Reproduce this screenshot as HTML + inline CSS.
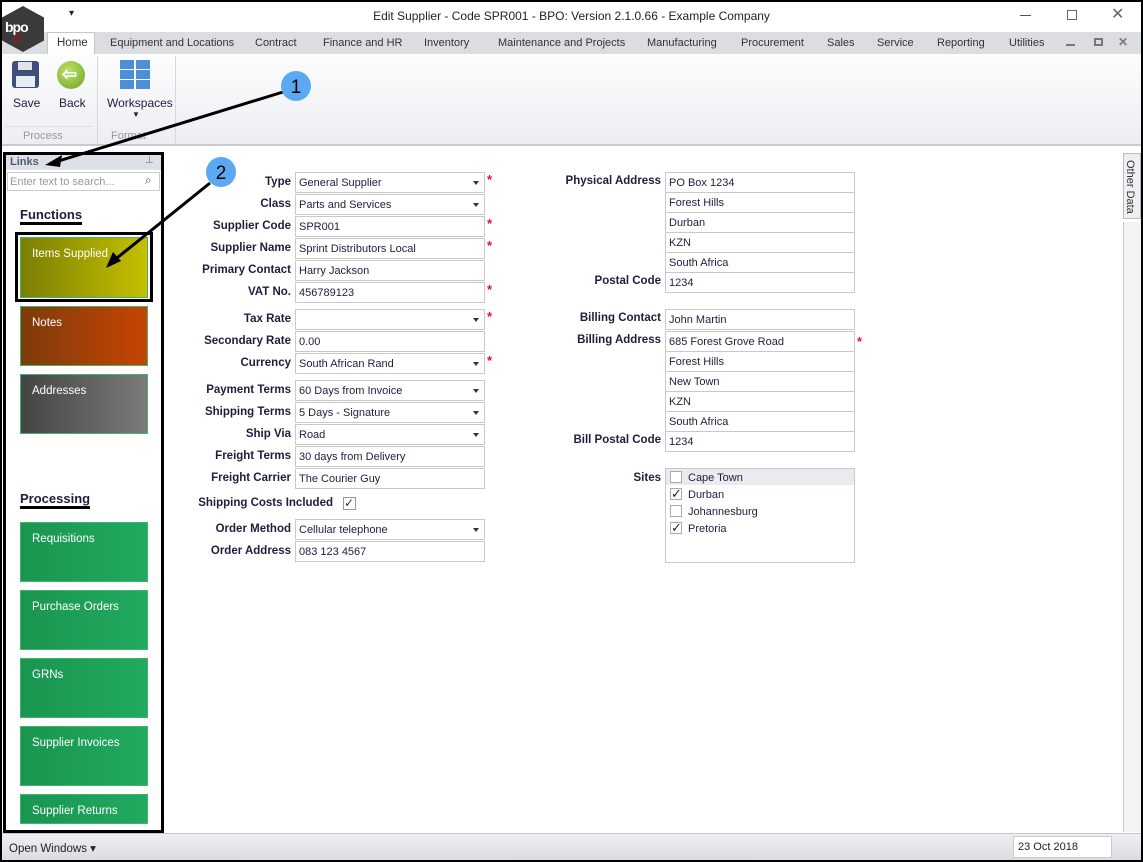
<!DOCTYPE html>
<html><head><meta charset="utf-8"><style>
*{box-sizing:border-box;margin:0;padding:0}
body{width:1143px;height:862px;position:relative;overflow:hidden;background:#fff;font-family:"Liberation Sans",Tahoma,sans-serif;font-size:11px;color:#1e1e3c}
.a{position:absolute}
.frame{left:0;top:0;width:1143px;height:862px;border:2px solid #000;pointer-events:none;z-index:50}
.tab{position:absolute;top:37px;font-size:11px;color:#333}
.lbl{position:absolute;font-weight:bold;font-size:11.5px;text-align:right;color:#1e1e3c}
.inp{position:absolute;height:21px;border:1px solid #c9c9c9;background:#fff;font-size:11px;padding:4px 0 0 3px;color:#1e1e3c}
.dd::after{content:"";position:absolute;right:5px;top:8px;border:3.5px solid transparent;border-top:4px solid #333}
.req{position:absolute;color:#e0103a;font-size:13px;font-weight:bold}
.tile{position:absolute;left:20px;width:128px;color:#fff;font-size:11.5px;padding:10px 0 0 11px;border:1px solid #3fb56a}
.head{position:absolute;left:20px;font-weight:bold;font-size:13px;color:#1e1e3c;border-bottom:3px solid #000;padding-bottom:0px}
</style></head><body>
<div class="a frame"></div>
<!-- title bar -->
<div class="a" style="left:0;top:0;width:1143px;height:32px;background:#fff"></div>
<div class="a" style="left:69px;top:8px;font-size:10px">▾</div>
<div class="a" style="left:0;top:9px;width:1143px;text-align:center;font-size:12px;color:#222">Edit Supplier - Code SPR001 - BPO: Version 2.1.0.66 - Example Company</div>
<div class="a" style="left:1020px;top:15px;width:11px;height:1px;background:#555"></div>
<div class="a" style="left:1067px;top:10px;width:10px;height:10px;border:1px solid #666"></div>
<div class="a" style="left:1111px;top:4px;font-size:16px;color:#666">✕</div>
<!-- tabs -->
<div class="a" style="left:2px;top:32px;width:1139px;height:22px;background:#dcdde1"></div>
<div class="a" style="left:47px;top:32px;width:48px;height:23px;background:#fff;border:1px solid #c6c6c6;border-bottom:none"></div>
<div class="tab" style="left:57px;font-size:11.5px">Home</div>
<div class="tab" style="left:110px">Equipment and Locations</div>
<div class="tab" style="left:255px">Contract</div>
<div class="tab" style="left:323px">Finance and HR</div>
<div class="tab" style="left:424px">Inventory</div>
<div class="tab" style="left:498px">Maintenance and Projects</div>
<div class="tab" style="left:647px">Manufacturing</div>
<div class="tab" style="left:741px">Procurement</div>
<div class="tab" style="left:827px">Sales</div>
<div class="tab" style="left:877px">Service</div>
<div class="tab" style="left:937px">Reporting</div>
<div class="tab" style="left:1009px">Utilities</div>
<div class="a" style="left:1066px;top:44px;width:9px;height:2px;background:#777"></div>
<div class="a" style="left:1094px;top:38px;width:9px;height:8px;border:2px solid #777"></div>
<div class="a" style="left:1118px;top:35px;font-size:12px;color:#777;font-weight:bold">✕</div>
<!-- logo -->
<div class="a" style="left:2px;top:6px;width:42px;height:46px;background:#3a3a3a;clip-path:polygon(50% 0,100% 25%,100% 75%,50% 100%,0 75%,0 25%);z-index:5"></div>
<div class="a" style="left:5px;top:19px;color:#fff;font-weight:bold;font-size:14px;letter-spacing:-1px;z-index:6">bpo</div>
<div class="a" style="left:14px;top:35px;width:7px;height:7px;border:1.5px solid #d00;border-radius:2px;z-index:6"></div>
<!-- ribbon -->
<div class="a" style="left:2px;top:54px;width:1139px;height:92px;background:linear-gradient(#fdfdfe,#eceef2);border-bottom:2px solid #c8cad0"></div>
<div class="a" style="left:97px;top:56px;width:1px;height:88px;background:#d8d8dc"></div>
<div class="a" style="left:175px;top:56px;width:1px;height:88px;background:#d8d8dc"></div>
<div class="a" style="left:12px;top:61px;width:27px;height:27px;background:#3d4f7a;border-radius:3px"></div>
<div class="a" style="left:18px;top:62px;width:14px;height:8px;background:#dfe3ea"></div>
<div class="a" style="left:16px;top:76px;width:19px;height:11px;background:#e8ecf3"></div>
<div class="a" style="left:13px;top:96px;font-size:12px">Save</div>
<div class="a" style="left:57px;top:61px;width:28px;height:28px;border-radius:50%;background:radial-gradient(circle at 40% 35%,#bfe26a,#6ca21f)"></div>
<div class="a" style="left:62px;top:64px;color:#fff;font-size:18px;font-weight:bold">⇦</div>
<div class="a" style="left:59px;top:96px;font-size:12px">Back</div>
<div class="a" style="left:120px;top:60px;width:30px;height:29px;background:repeating-linear-gradient(90deg,#4d8fd6 0 14px,transparent 14px 16px),#fff;-webkit-mask:repeating-linear-gradient(#000 0 9px,transparent 9px 10px)"></div>
<div class="a" style="left:107px;top:96px;font-size:12px">Workspaces</div>
<div class="a" style="left:132px;top:110px;font-size:8px">▼</div>
<div class="a" style="left:23px;top:130px;font-size:11px;color:#999">Process</div>
<div class="a" style="left:111px;top:130px;font-size:11px;color:#999">Format</div>
<div class="a" style="left:4px;top:126px;width:89px;height:1px;background:#e0e0e4"></div>
<!-- links panel -->
<div class="a" style="left:3px;top:152px;width:161px;height:681px;border:3px solid #000;background:#fff"></div>
<div class="a" style="left:6px;top:155px;width:155px;height:15px;background:#dde0e6"></div>
<div class="a" style="left:10px;top:156px;font-weight:bold;font-size:11px;color:#555a70">Links</div>
<div class="a" style="left:145px;top:155px;font-size:10px;color:#777">⊥</div>
<div class="a" style="left:7px;top:172px;width:153px;height:19px;border:1px solid #ccc;background:#fff;color:#999;font-size:11px;padding:3px 0 0 2px">Enter text to search...</div>
<div class="a" style="left:145px;top:173px;font-size:12px;color:#555">⌕</div>
<div class="head" style="top:207px">Functions</div>
<div class="a" style="left:15px;top:232px;width:138px;height:70px;border:3px solid #000"></div>
<div class="tile" style="top:237px;height:61px;background:linear-gradient(90deg,#7b7f04,#c5c000)">Items Supplied</div>
<div class="tile" style="top:306px;height:60px;background:linear-gradient(90deg,#7d3c0b,#c64404)">Notes</div>
<div class="tile" style="top:374px;height:60px;background:linear-gradient(90deg,#444,#7b7b7b)">Addresses</div>
<div class="head" style="top:491px">Processing</div>
<div class="tile" style="top:522px;height:60px;background:linear-gradient(90deg,#1a9550,#21aa60)">Requisitions</div>
<div class="tile" style="top:590px;height:60px;background:linear-gradient(90deg,#1a9550,#21aa60)">Purchase Orders</div>
<div class="tile" style="top:658px;height:60px;background:linear-gradient(90deg,#1a9550,#21aa60)">GRNs</div>
<div class="tile" style="top:726px;height:60px;background:linear-gradient(90deg,#1a9550,#21aa60)">Supplier Invoices</div>
<div class="tile" style="top:794px;height:30px;background:linear-gradient(90deg,#1a9550,#21aa60)">Supplier Returns</div>
<!-- other data -->
<div class="a" style="left:1123px;top:153px;width:18px;height:66px;background:#eeeff2;border:1px solid #bbb"></div>
<div class="a" style="left:1124px;top:160px;writing-mode:vertical-rl;font-size:11px;color:#333">Other Data</div>
<div class="a" style="left:1123px;top:222px;width:18px;height:610px;background:#f2f3f5;border-left:1px solid #ccc"></div>
<!-- forms -->
<div id="lf"></div>
<script>
var L=[["Type",182,"General Supplier",1,1],["Class",204,"Parts and Services",1,0],["Supplier Code",226,"SPR001",0,1],["Supplier Name",248,"Sprint Distributors Local",0,1],["Primary Contact",270,"Harry Jackson",0,0],["VAT No.",292,"456789123",0,1],["Tax Rate",319,"",1,1],["Secondary Rate",341,"0.00",0,0],["Currency",363,"South African Rand",1,1],["Payment Terms",390,"60 Days from Invoice",1,0],["Shipping Terms",412,"5 Days - Signature",1,0],["Ship Via",434,"Road",1,0],["Freight Terms",456,"30 days from Delivery",0,0],["Freight Carrier",478,"The Courier Guy",0,0],["Order Method",529,"Cellular telephone",1,0],["Order Address",551,"083 123 4567",0,0]];
var h="";
L.forEach(function(r){h+='<div class="lbl" style="left:150px;width:141px;top:'+(r[1]-6)+'px">'+r[0]+'</div><div class="inp'+(r[3]?' dd':'')+'" style="left:295px;width:190px;top:'+(r[1]-10)+'px">'+r[2]+'</div>'+(r[4]?'<div class="req" style="left:487px;top:'+(r[1]-10)+'px">*</div>':'');});
h+='<div class="lbl" style="left:150px;width:183px;top:497px">Shipping Costs Included</div><div class="a" style="left:343px;top:497px;width:13px;height:13px;border:1px solid #999;font-size:12px;line-height:11px;color:#333">✓</div>';
var R=[["Physical Address",182,"PO Box 1234"],["",202,"Forest Hills"],["",222,"Durban"],["",242,"KZN"],["",262,"South Africa"],["Postal Code",282,"1234"],["Billing Contact",319,"John Martin"],["Billing Address",341,"685 Forest Grove Road"],["",361,"Forest Hills"],["",381,"New Town"],["",401,"KZN"],["",421,"South Africa"],["Bill Postal Code",441,"1234"]];
R.forEach(function(r){h+=(r[0]?'<div class="lbl" style="left:500px;width:161px;top:'+(r[1]-7)+'px">'+r[0]+'</div>':'')+'<div class="inp" style="left:665px;width:190px;top:'+(r[1]-10)+'px">'+r[2]+'</div>';});
h+='<div class="req" style="left:857px;top:334px">*</div>';
document.getElementById("lf").innerHTML=h;
</script>
<div class="lbl" style="left:500px;width:161px;top:472px">Sites</div>
<div class="a" style="left:665px;top:468px;width:190px;height:95px;border:1px solid #c9c9c9;background:#fff"></div>
<div class="a" style="left:666px;top:469px;width:188px;height:16px;background:#eaebee"></div>
<div class="a" style="left:670px;top:471px;width:12px;height:12px;border:1px solid #aaa;background:#fff"></div>
<div class="a" style="left:688px;top:472px">Cape Town</div>
<div class="a" style="left:670px;top:488px;width:12px;height:12px;border:1px solid #aaa;font-size:13px;line-height:10px">✓</div>
<div class="a" style="left:688px;top:489px">Durban</div>
<div class="a" style="left:670px;top:505px;width:12px;height:12px;border:1px solid #aaa"></div>
<div class="a" style="left:688px;top:506px">Johannesburg</div>
<div class="a" style="left:670px;top:522px;width:12px;height:12px;border:1px solid #aaa;font-size:13px;line-height:10px">✓</div>
<div class="a" style="left:688px;top:523px">Pretoria</div>
<!-- status bar -->
<div class="a" style="left:2px;top:833px;width:1139px;height:27px;background:linear-gradient(#eeeff2,#dcdde2);border-top:1px solid #c8c8cc"></div>
<div class="a" style="left:9px;top:841px;font-size:11.5px;color:#222">Open Windows ▾</div>
<div class="a" style="left:1013px;top:836px;width:99px;height:22px;background:#fff;border:1px solid #ccc;padding:4px 0 0 4px;font-size:11px;color:#222">23 Oct 2018</div>
<!-- annotations -->
<svg class="a" style="left:0;top:0;z-index:40" width="1143" height="862">
<line x1="283" y1="92" x2="52" y2="163" stroke="#000" stroke-width="3"/>
<path d="M45,165 L62,155 L60,167 z" fill="#000"/>
<line x1="210" y1="183" x2="112" y2="262" stroke="#000" stroke-width="3"/>
<path d="M106,268 L113,252 L121,261 z" fill="#000"/>
<circle cx="296" cy="86" r="15" fill="#5aa9f2"/>
<text x="296" y="93" text-anchor="middle" font-family="Liberation Sans" font-size="19" fill="#000">1</text>
<circle cx="221" cy="172" r="15" fill="#5aa9f2"/>
<text x="221" y="179" text-anchor="middle" font-family="Liberation Sans" font-size="19" fill="#000">2</text>
</svg>
</body></html>
